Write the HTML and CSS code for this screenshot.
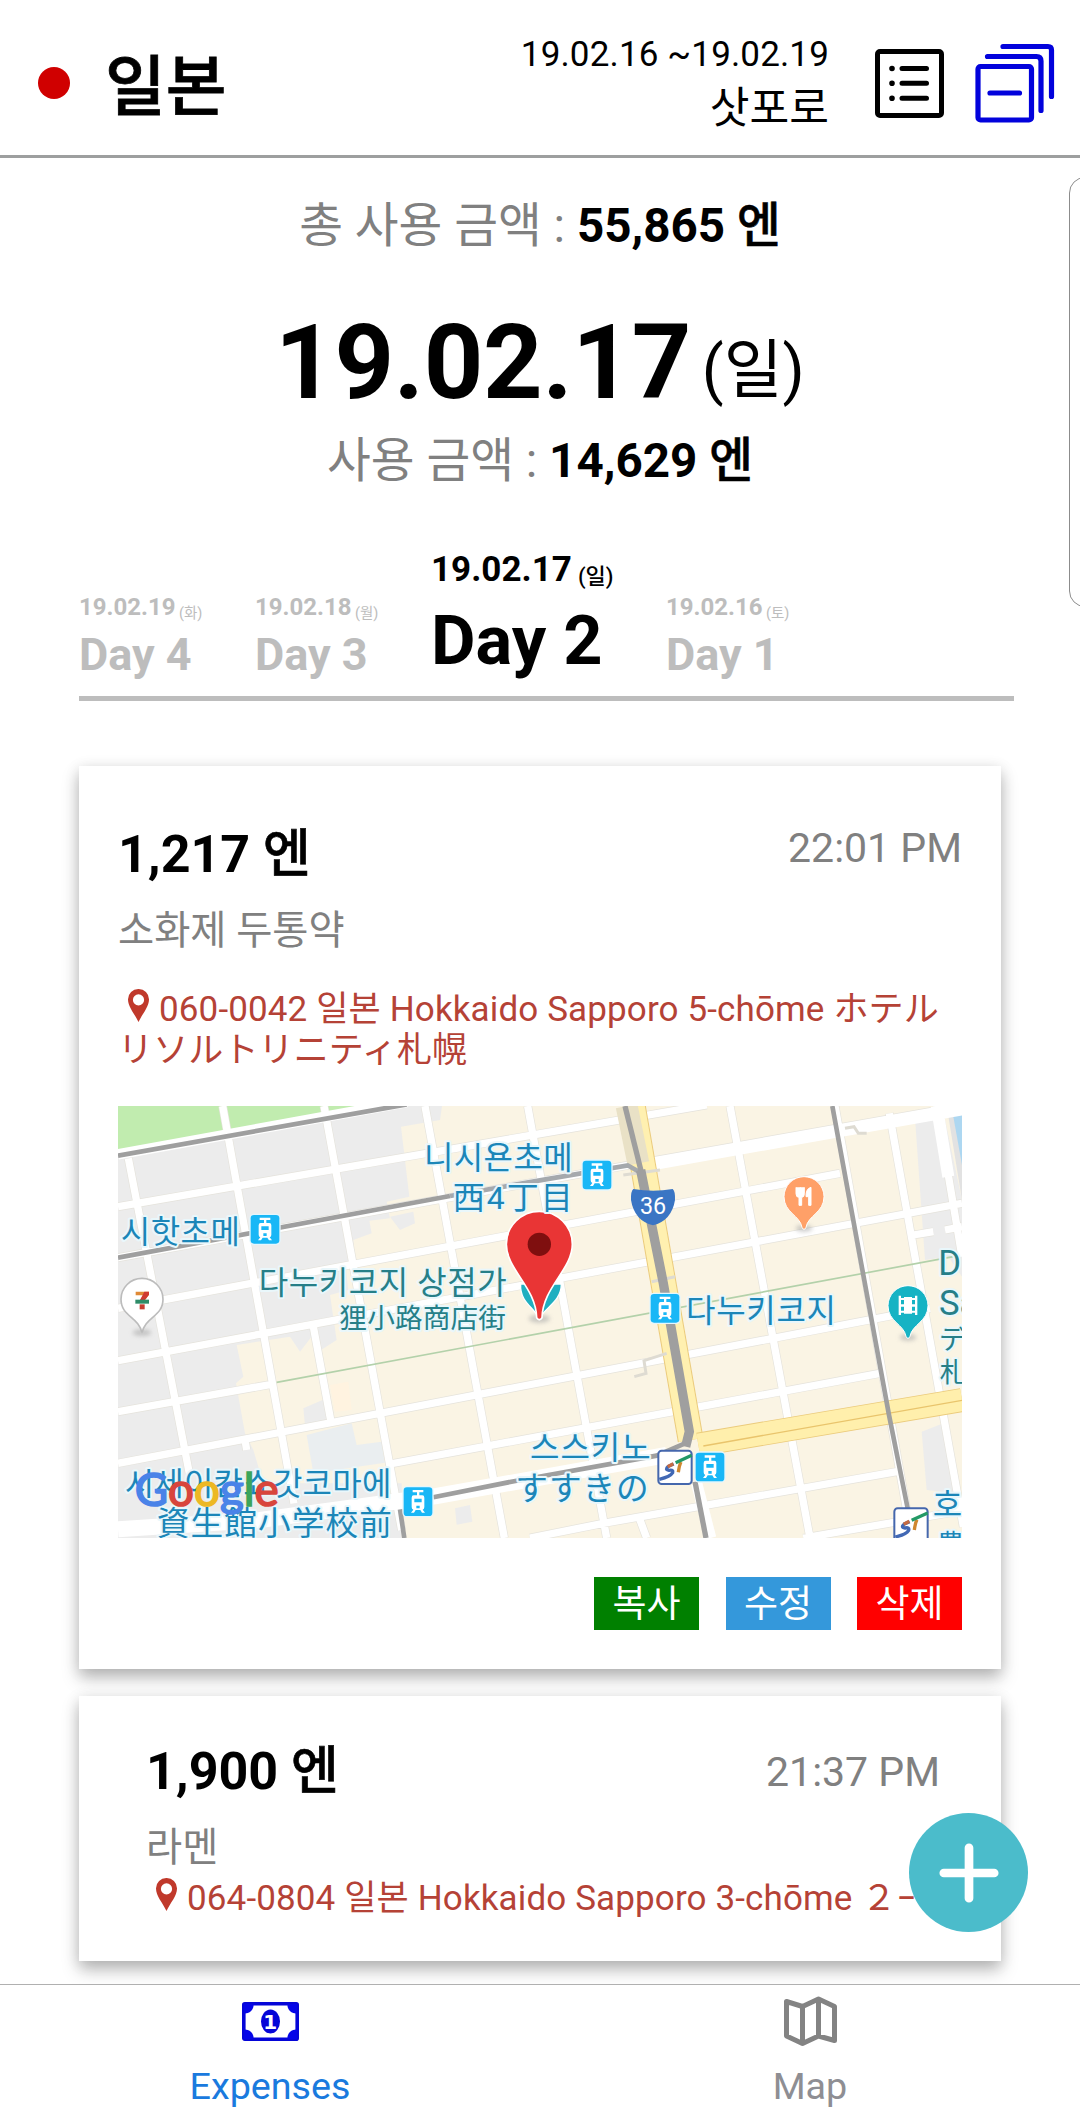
FILE: index.html
```html
<!DOCTYPE html>
<html lang="ko">
<head>
<meta charset="utf-8">
<title>일본 여행 경비</title>
<link rel="stylesheet" href="styles.css">
</head>
<body>
<header class="header">
  <span class="flag"></span>
  <h1 class="country">일본</h1>
  <div class="trip">
    <div class="trip-dates">19.02.16 ~19.02.19</div>
    <div class="trip-city">삿포로</div>
  </div>
  <svg class="icon-list" viewBox="0 0 69 69" fill="none" stroke="#000" stroke-width="5" stroke-linecap="round">
    <rect x="2.5" y="2.5" width="64" height="64" rx="2.5"/>
    <path d="M27 19.5h24.500M27 34.300h24.500M27 49.300h24.500"/>
    <path d="M17 19.500h.01M17 34.300h.01M17 49.300h.01" stroke-width="5.600"/>
  </svg>
  <svg class="icon-stack" viewBox="0 0 80 80" fill="none" stroke="#0202dc" stroke-width="5.200" stroke-linecap="round" stroke-linejoin="round">
    <rect x="3" y="23.500" width="53.500" height="53.500" rx="2.500"/>
    <path d="M15 50h29.500M12.500 13.500h49q4.500 0 4.500 4.500v49.500M28 3.500h45q3.500 0 3.500 3.500v46.500"/>
  </svg>
</header>

<main class="content">
  <p class="sum sum-total">총 사용 금액 : <b>55,865 <span class="unit">엔</span></b></p>
  <h2 class="date"><b>19.02.17</b> <span class="date-dow">(일)</span></h2>
  <p class="sum">사용 금액 : <b>14,629 <span class="unit">엔</span></b></p>

  <nav class="days">
    <a class="day"><span class="day-date">19.02.19 <small>(화)</small></span><span class="day-name">Day 4</span></a>
    <a class="day"><span class="day-date">19.02.18 <small>(월)</small></span><span class="day-name">Day 3</span></a>
    <a class="day day-active"><span class="day-date">19.02.17 <small>(일)</small></span><span class="day-name">Day 2</span></a>
    <a class="day"><span class="day-date">19.02.16 <small>(토)</small></span><span class="day-name">Day 1</span></a>
  </nav>

  <article class="card card-open">
    <div class="card-head"><b class="price">1,217 <span class="unit">엔</span></b><span class="time">22:01 PM</span></div>
    <div class="memo">소화제 두통약</div>
    <div class="address"><svg class="pin" viewBox="0 0 21 33"><path fill="#c0392b" fill-rule="evenodd" d="M10.500 0A10.400 10.400 0 0 0 0 10.500C0 18 6.500 24.500 10.500 33C14.500 24.500 21 18 21 10.500A10.400 10.400 0 0 0 10.500 0ZM10.500 5.300a5.600 5.600 0 1 1 0 11.200a5.600 5.600 0 0 1 0-11.200Z"/></svg>060-0042 일본 Hokkaido Sapporo 5-chōme <span lang="ja">ホテル<br>リソルトリニティ札幌</span></div>

    <svg class="map" viewBox="54 48 2532 1296">
      <defs>
        <g id="tram">
          <rect x="-4" y="-4" width="94" height="94" rx="14" fill="#e4f6fd"/>
          <rect width="86" height="86" rx="10" fill="#19b7f6"/>
          <path d="M27 8h32v7H47v9h9q6 0 6 7v28q0 6-5 8l7 9h-9l-5-8H36l-5 8h-9l7-9q-5-2-5-8V31q0-7 6-7h10v-9H27Z" fill="#fff"/>
          <path d="M32 34h22v11H32zM38 55h10v8H38z" fill="#19b7f6"/>
        </g>
        <g id="subway">
          <rect x="2" y="2" width="100" height="100" rx="10" fill="#fff" stroke="#4567ad" stroke-width="6"/>
          <path d="M5 88Q38 80 45 68Q48 58 34 61Q20 59 32 49L48 42" fill="none" stroke="#4168b4" stroke-width="10"/>
          <path d="M30 50L47 41" stroke="#c56b42" stroke-width="10"/>
          <path d="M70 36Q65 45 62 67" fill="none" stroke="#cf872f" stroke-width="10"/>
          <path d="M54 38L102 16" stroke="#239966" stroke-width="10"/>
        </g>
        <filter id="soft" x="-1" y="-1" width="3" height="3"><feGaussianBlur stdDeviation="7"/></filter>
      </defs>
      <rect x="54" y="48" width="2532" height="1296" fill="#faf4e4"/>
      <g fill="#ececec">
        <path d="M54 48H1026L1020 90L903 110L928 320L860 335L870 385L808 392L815 430L760 450L765 515L735 520L745 600L690 615L710 750L655 785L650 720L600 785L570 740L410 765L430 860L408 880L435 1030L460 1080L490 1180H905V1344H54Z"/>
        <path d="M870 380L940 365L945 400L900 420ZM610 955L690 920L700 985L615 1005ZM1065 1255L1110 1245L1117 1295L1070 1304Z"/>
        <path d="M2445 85L2530 65L2586 330V560L2545 500L2475 510ZM2465 1025L2530 1000L2570 1210L2480 1200Z"/>
      </g>
      <path d="M620 1035L755 1000L770 1065L845 1055L855 1118L640 1150Z" fill="#eaeef0"/>
      <path d="M690 885L745 875L755 960L705 965Z" fill="#fff3e0"/>
      <path d="M54 48H880L54 188Z" fill="#c1ecaf"/>
      <path d="M2540 48H2586V330Z" fill="#e2e2e2"/>
      <path d="M2556 58H2586V225Z" fill="#add7f1"/>
      <g fill="none" stroke="#e5e3dc" stroke-width="26">
        <path d="M85 205L268 1150M368 48L582 1240M672 48L905 1320M975 48L1213 1344M1283 48L1520 1344M640 710L692 990M1890 48L2130 1344M2205 48L2435 1344M2368 70L2590 1310M2510 48L2586 500M54 350L1820 45M54 503L1583 226L2586 48M54 655L2220 250M54 812L2586 340M54 965L520 882M54 1120L2490 655M870 1122L2340 850M1290 1344L1510 1300L2390 1145M2110 1344L2586 1262M435 1050L440 1080M1620 1290L1640 1344M2440 435L2500 425M2535 420L2586 410"/>
      </g>
      <g fill="none" stroke="#fff" stroke-width="22">
        <path d="M85 205L268 1150M368 48L582 1240M672 48L905 1320M975 48L1213 1344M1283 48L1520 1344M640 710L692 990M1890 48L2130 1344M2205 48L2435 1344M2368 70L2590 1310M2510 48L2586 500M54 350L1820 45M54 503L1583 226L2586 48M54 655L2220 250M54 812L2586 340M54 965L520 882M54 1120L2490 655M870 1122L2340 850M1290 1344L1510 1300L2390 1145M2110 1344L2586 1262M435 1050L440 1080M1620 1290L1640 1344M2440 435L2500 425M2535 420L2586 410"/>
        <path d="M54 193L920 36" stroke-width="32"/>
        <path d="M54 1318L480 1290L1010 1218L1700 1095" stroke-width="48"/>
        <path d="M1640 226L2586 58M2510 48L2545 260" stroke-width="36"/>
        <path d="M1790 1180L1832 1344" stroke-width="34"/>
      </g>
      <path d="M530 877L2560 500" stroke="#b3d1aa" stroke-width="5"/>
      <g fill="none">
        <path d="M1598 48L1772 1050" stroke="#ebcb7c" stroke-width="78"/>
        <path d="M1598 48L1772 1050" stroke="#fff0b0" stroke-width="72"/>
        <path d="M1580 48L1615 220" stroke="#e9e1c6" stroke-width="66"/>
        <path d="M1795 1064L2586 930" stroke="#ebcb7c" stroke-width="72"/>
        <path d="M1795 1064L2586 930" stroke="#ffefac" stroke-width="67"/>
        <path d="M1810 1068L2586 931" stroke="#e9c46c" stroke-width="4"/>
        <path d="M1603 860L1638 850L1632 812L1700 790M1655 575L1725 560M1570 255L1680 240M2235 115L2262 110L2275 130H2300" stroke="#dedbd2" stroke-width="9"/>
      </g>
      <g fill="none" stroke="#9f9f9f" stroke-width="14">
        <path d="M54 197L920 43M54 503L1050 318M2197 48L2367 975L2425 1265M1000 1222L1250 1172L1670 1097L1755 1060M900 1258L913 1344" />
        <path d="M1050 318L1350 266L1583 226L1625 250" stroke="#a5a9ad"/>
        <path d="M1575 48L1625 250" stroke-width="16"/>
        <path d="M1622 240L1690 580L1768 1025L1757 1070" stroke-width="28"/>
        <path d="M1785 1175L1818 1344" stroke-width="16"/>
      </g>
      <use href="#tram" x="452" y="375"/><use href="#tram" x="1448" y="212"/><use href="#tram" x="1652" y="612"/>
      <use href="#tram" x="1787" y="1088"/><use href="#tram" x="911" y="1192"/>
      <use href="#subway" x="1673" y="1080"/><use href="#subway" x="2381" y="1253"/>
      <path d="M1600 297Q1660 308 1718 297Q1726 303 1725 330Q1715 392 1659 406Q1603 392 1593 330Q1592 303 1600 297Z" fill="#3a75c4"/>
      <text x="1659" y="371" font-size="70" fill="#fff" text-anchor="middle">36</text>
      <g fill="#aaa" opacity=".6" filter="url(#soft)"><ellipse cx="126" cy="728" rx="28" ry="10"/><ellipse cx="1318" cy="686" rx="32" ry="12"/><ellipse cx="2112" cy="415" rx="25" ry="10"/><ellipse cx="2424" cy="742" rx="25" ry="10"/></g>
      <path d="M126 728C116 680 63 680 63 628A63 63 0 0 1 189 628C189 680 136 680 126 728Z" fill="#fff" stroke="#bcbcbc" stroke-width="5"/>
      <path d="M107 605H147V614L133 632H119L130 616H107Z" fill="#e08a36"/><path d="M133 605H147V614L133 632H119Z" fill="#cf3b31"/><path d="M106 629H147V641H106Z" fill="#2f8c68"/><path d="M119 643H134V658H119Z" fill="#c83d30"/>
      <path d="M2112 418Q2108 418 2106 412C2100 376 2052 368 2052 320A60 60 0 0 1 2172 320C2172 368 2124 376 2118 412Q2116 418 2112 418Z" fill="#ffa068" stroke="#fff" stroke-width="3"/>
      <path d="M2088 292V311Q2088 322 2097 322V346H2105V322Q2113 322 2113 311V292M2101 292V314M2133 346V292Q2117 296 2118 320H2126V346Z" fill="#fff" stroke="#fff" stroke-width="3"/>
      <path d="M2424 745Q2420 745 2418 739C2412 703 2364 695 2364 647A60 60 0 0 1 2484 647C2484 695 2436 703 2430 739Q2428 745 2424 745Z" fill="#16b3c4" stroke="#fff" stroke-width="3"/>
      <path d="M2412 621H2436V671H2412ZM2396 617H2403V675H2396ZM2445 617H2452V675H2445ZM2402 624H2446V630H2402ZM2402 643H2446V650H2402ZM2402 662H2446V668H2402Z" fill="#fff"/>
      <path d="M1318 690C1310 655 1258 640 1262 582H1384C1384 640 1326 655 1318 690Z" fill="#20afc0" stroke="#fff" stroke-width="4"/>
      <path d="M1318 364A99 99 0 0 1 1417 463C1417 538 1328 592 1326 683Q1318 695 1310 683C1308 592 1219 538 1219 463A99 99 0 0 1 1318 364Z" fill="#e93535" stroke="#fff" stroke-width="5"/>
      <circle cx="1318" cy="463" r="35" fill="#7f0f0f"/>
      <g class="label">
        <text x="972" y="237" font-size="96" textLength="446">니시욘초메</text>
        <text x="1058" y="357" font-size="96" textLength="360" lang="ja">西4丁目</text>
        <text x="62" y="459" font-size="96" textLength="358">시핫초메</text>
        <text x="74" y="1214" font-size="96" textLength="800">시세이칸쇼갓코마에</text>
        <text x="170" y="1334" font-size="98" textLength="706" lang="ja">資生館小学校前</text>
        <text x="1290" y="1106" font-size="96" textLength="362">스스키노</text>
        <text x="1246" y="1230" font-size="98" textLength="400" lang="ja">すすきの</text>
        <text x="1758" y="697" font-size="96" textLength="450">다누키코지</text>
        <text x="2498" y="1278" font-size="96">호스이</text>
        <text x="2510" y="1396" font-size="84" lang="ja">豊水</text>
      </g>
      <g class="label label-poi">
        <text x="476" y="613" font-size="96" textLength="744">다누키코지 상점가</text>
        <text x="718" y="714" font-size="83" textLength="500" lang="ja">狸小路商店街</text>
        <text x="2515" y="556" font-size="104">D</text>
        <text x="2517" y="676" font-size="104">Sa</text>
        <text x="2517" y="777" font-size="83" lang="ja">ディ</text>
        <text x="2519" y="876" font-size="83" lang="ja">札幌</text>
      </g>
      <text class="google" x="104" y="1249" font-size="138" textLength="432" lengthAdjust="spacingAndGlyphs"><tspan class="g-blue">G</tspan><tspan class="g-red">o</tspan><tspan class="g-yellow">o</tspan><tspan class="g-blue">g</tspan><tspan class="g-green">l</tspan><tspan class="g-red">e</tspan></text>
    </svg>

    <div class="actions"><button class="btn btn-copy">복사</button><button class="btn btn-edit">수정</button><button class="btn btn-delete">삭제</button></div>
  </article>

  <article class="card card-closed">
    <div class="card-head"><b class="price">1,900 <span class="unit">엔</span></b><span class="time">21:37 PM</span></div>
    <div class="memo">라멘</div>
    <div class="address"><svg class="pin" viewBox="0 0 21 33"><path fill="#c0392b" fill-rule="evenodd" d="M10.500 0A10.400 10.400 0 0 0 0 10.500C0 18 6.500 24.500 10.500 33C14.500 24.500 21 18 21 10.500A10.400 10.400 0 0 0 10.500 0ZM10.500 5.300a5.600 5.600 0 1 1 0 11.200a5.600 5.600 0 0 1 0-11.200Z"/></svg>064-0804 일본 Hokkaido Sapporo 3-chōme <span lang="ja">２−</span></div>
  </article>
</main>

<footer class="tabs">
  <a class="tab tab-active">
    <svg class="tab-icon" viewBox="0 0 57 50">
      <rect x="1.800" y="7.800" width="53.400" height="35.400" rx="1" fill="#fff" stroke="#0505d8" stroke-width="3.600"/>
      <path fill="#0505e8" d="M2 8h9.500A8.500 8.500 0 0 1 2 17.500ZM55 8h-9.500A8.500 8.500 0 0 0 55 17.500ZM2 43h9.500A8.500 8.500 0 0 0 2 33.500ZM55 43h-9.500A8.500 8.500 0 0 1 55 33.500Z"/>
      <ellipse cx="28.500" cy="25.500" rx="9.500" ry="12" fill="#0505d8"/>
      <text class="bill" x="28.300" y="33" text-anchor="middle">1</text>
    </svg>
    <span>Expenses</span>
  </a>
  <a class="tab">
    <svg class="tab-icon" viewBox="0 0 57 50" fill="none" stroke="#838383" stroke-width="5" stroke-linecap="round" stroke-linejoin="round">
      <path d="M4.500 5.500L20.500 10.500L36.500 3L52.500 10.500V44.500L36.500 40L20.500 47.500L4.500 40ZM20.500 10.500V47.500M36.500 3V40"/>
    </svg>
    <span>Map</span>
  </a>
</footer>

<div class="edge-panel"></div>
<button class="fab" aria-label="추가"><svg viewBox="0 0 60 60" stroke="#fff" stroke-width="8.700" stroke-linecap="round"><path d="M30 4.800v50.400M4.800 30h50.400"/></svg></button>
</body>
</html>
```
FILE: styles.css
```css
* { box-sizing: border-box; margin: 0; padding: 0; }

body {
  width: 1080px;
  height: 2109px;
  display: flex;
  flex-direction: column;
  position: relative;
  overflow: hidden;
  background: #fff;
  color: #000;
  font-family: Roboto, "Noto Sans CJK KR", sans-serif;
}

[lang="ja"] { font-family: Roboto, "Noto Sans CJK JP", sans-serif; }

/* Header */
.header {
  flex: none;
  display: flex;
  align-items: flex-start;
  height: 158px;
  padding-left: 38px;
  border-bottom: 3px solid #9d9f9f;
}
.flag { width: 32px; height: 32px; margin-top: 67px; border-radius: 50%; background: #d00000; }
.country { margin: 48px 0 0 35px; font-size: 66px; line-height: 80px; font-weight: 500; -webkit-text-stroke: .8px #000; }
.trip { margin: 34px 0 0 auto; text-align: right; }
.trip-dates { font-size: 35px; line-height: 42px; letter-spacing: .15px; }
.trip-city { margin-top: 8px; font-size: 43.200px; line-height: 50px; }
.icon-list { width: 69px; height: 69px; margin: 49px 0 0 46px; }
.icon-stack { width: 80px; height: 80px; margin: 43px 25px 0 31px; }

.unit { font-weight: 500; -webkit-text-stroke: .6px #000; }

/* Day summary */
.content { flex: none; height: 1826px; overflow: hidden; }
.sum { font-size: 47.600px; line-height: 60px; text-align: center; color: #808080; }
.sum b { color: #000; }
.sum-total { margin-top: 38px; }
.date { height: 120px; margin: 47px 0 8px; font-size: 104px; line-height: 120px; text-align: center; font-weight: 400; word-spacing: -15px; }
.date b { letter-spacing: -.3px; }
.date-dow { font-size: 64px; line-height: 1; vertical-align: 6px; }

/* Day selector */
.days {
  display: flex;
  align-items: flex-end;
  width: 935px;
  height: 153px;
  margin: 57px 0 0 79px;
  padding-bottom: 15px;
  border-bottom: 5px solid #bdbdbd;
  color: #bdbdbd;
  font-weight: 700;
}
.day { width: 176px; flex: none; white-space: nowrap; }
.day-date, .day-name { display: block; }
.day-date { margin-bottom: 8px; font-size: 24px; line-height: 28px; word-spacing: -2.500px; }
.day-date small { font-size: 14.500px; line-height: 1; font-weight: 400; vertical-align: -3px; }
.day-name { font-size: 45px; line-height: 52px; }
.day-active { width: 235px; color: #000; }
.day-active .day-date { margin-bottom: 10px; font-size: 35px; line-height: 42px; }
.day-active small { font-size: 22px; font-weight: 500; }
.day-active .day-name { font-size: 68.500px; line-height: 80px; }

/* Expense cards */
.card {
  width: 922px;
  margin-left: 79px;
  background: #fff;
  box-shadow: 0 9px 16px rgba(0, 0, 0, .26), 0 2px 14px rgba(0, 0, 0, .1);
}
.card-open { height: 903px; margin-top: 65px; padding: 50px 39px 0; }
.card-closed { height: 265px; margin-top: 27px; padding: 37px 61px 0 67px; }
.card-head { display: flex; justify-content: space-between; }
.price { font-size: 52px; line-height: 78px; }
.time { font-size: 41px; line-height: 64px; color: #808080; }
.memo { font-size: 39.300px; line-height: 50px; color: #808080; }
.address { font-size: 35px; line-height: 41px; color: #b54236; letter-spacing: .13px; white-space: nowrap; }
.pin { width: 21px; height: 33px; margin: 0 10px 0 10px; vertical-align: -1px; }
.card-open .memo { margin-top: 12px; }
.card-open .address { margin-top: 33px; }
.card-closed .time { margin-top: 7px; }
.card-closed .memo { margin-top: 12px; }
.card-closed .address { margin-top: 5px; }

.map { display: block; width: 844px; height: 432px; margin-top: 35px; overflow: hidden; }
.label { fill: #1b86b8; stroke: #e9f7fb; stroke-width: 12px; stroke-linejoin: round; paint-order: stroke; }
.label-poi { fill: #267f88; }
.google { font-family: Lato, sans-serif; font-weight: 400; stroke-width: 5px; }
.g-blue { fill: #4a83e8; stroke: #4a83e8; }
.g-red { fill: #d8453c; stroke: #d8453c; }
.g-yellow { fill: #edb824; stroke: #edb824; }
.g-green { fill: #3ba55b; stroke: #3ba55b; }

.actions { display: flex; justify-content: flex-end; gap: 26.500px; margin-top: 39px; }
.btn {
  width: 105px;
  height: 53px;
  padding-top: 3px;
  border: 0;
  color: #fff;
  font: 37px/50px Roboto, "Noto Sans CJK KR", sans-serif;
}
.btn-copy { background: #008000; }
.btn-edit { background: #3498db; }
.btn-delete { background: #f00; }

/* Bottom tabs */
.tabs { flex: 1; display: flex; position: relative; border-top: 1px solid #b0b0b0; background: #fff; }
.tab { flex: 1; display: flex; flex-direction: column; align-items: center; color: #8e8e93; font-size: 37.700px; line-height: 44px; }
.tab-icon { width: 57px; height: 50px; margin: 11px 0 18px; }
.tab-active { color: #1a7ade; }
.bill { font: 700 20px "DejaVu Sans", sans-serif; fill: #fff; }

/* Overlays */
.edge-panel {
  position: absolute;
  top: 177px;
  right: -30px;
  width: 41px;
  height: 430px;
  border: 1px solid #8c8c8c;
  border-radius: 16px;
}
.fab {
  position: absolute;
  left: 909px;
  top: 1813px;
  width: 119px;
  height: 119px;
  display: grid;
  place-items: center;
  border: 0;
  border-radius: 50%;
  background: #4bbccb;
}
.fab svg { width: 60px; height: 60px; }
```
